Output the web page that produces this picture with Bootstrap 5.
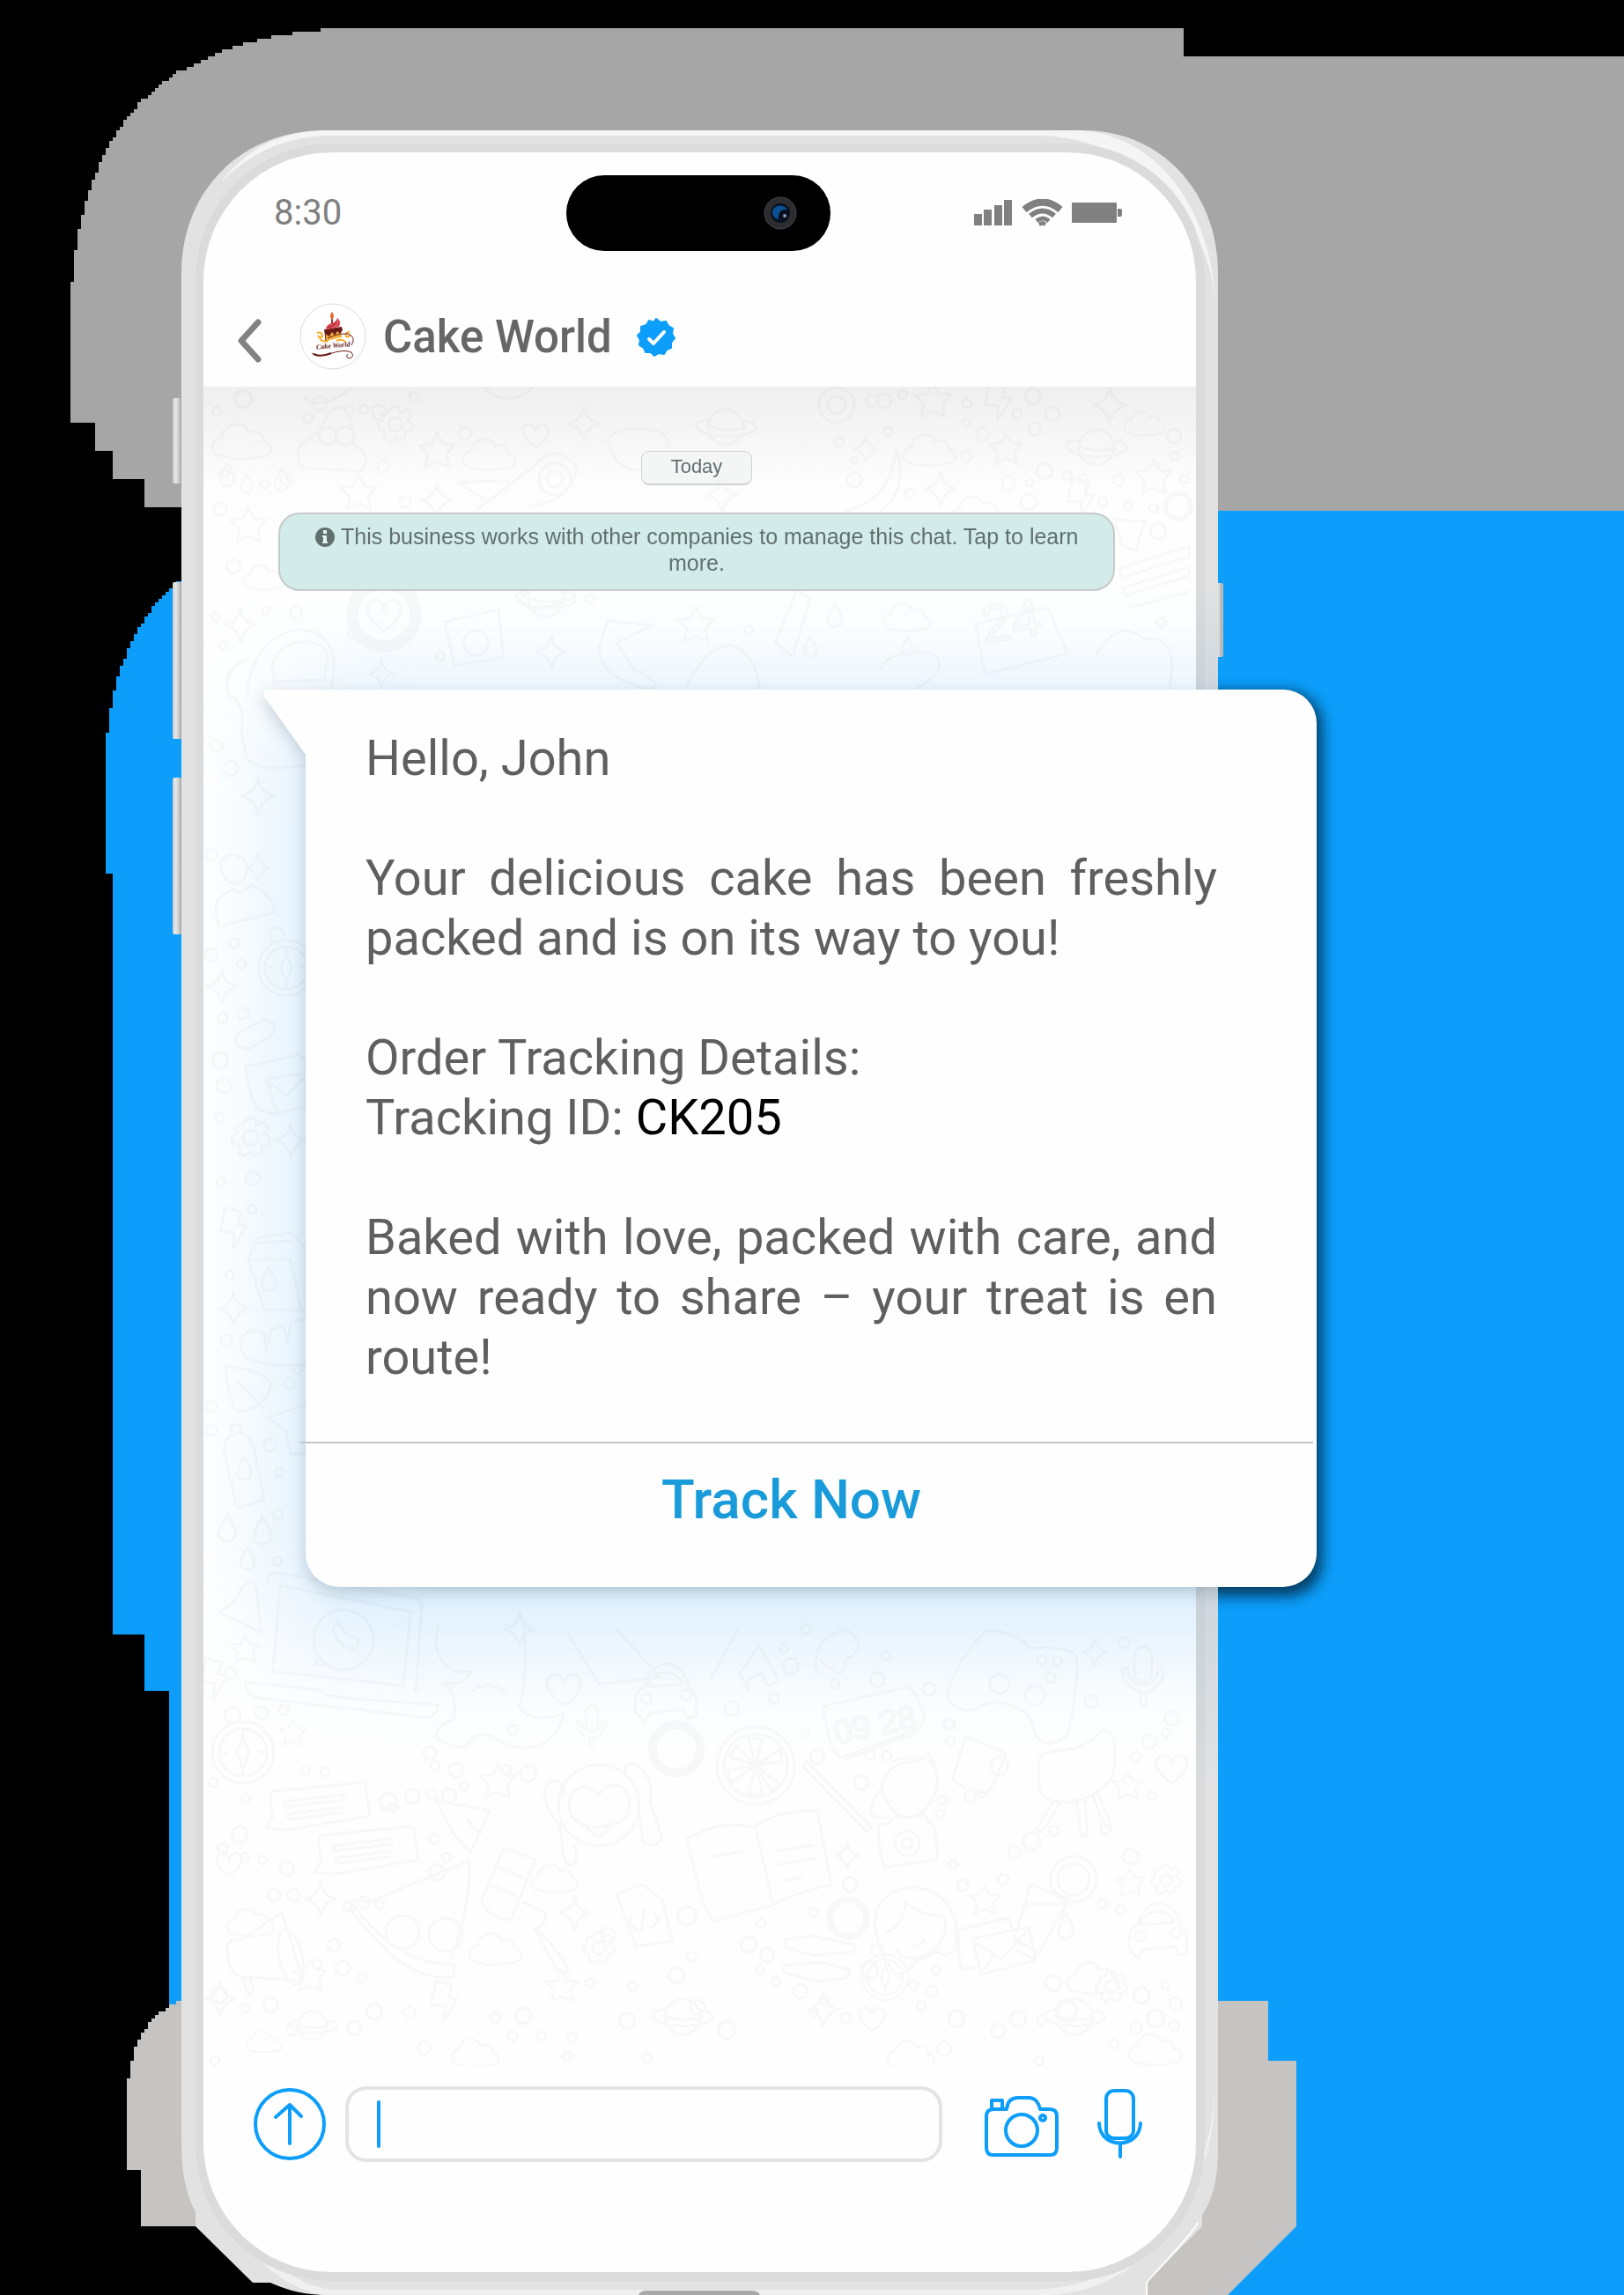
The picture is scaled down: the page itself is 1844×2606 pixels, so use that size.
<!DOCTYPE html>
<html lang="en">
<head>
<meta charset="utf-8">
<meta name="viewport" content="width=device-width, initial-scale=1">
<title>Cake World chat</title>
<link href="https://cdn.jsdelivr.net/npm/bootstrap@5.3.0/dist/css/bootstrap.min.css" rel="stylesheet">
<style>
  body { background: #000; font-family: Roboto, "Liberation Sans", sans-serif; }
  .stage { display: grid; grid-template-columns: 231fr 1127fr 486fr; padding: 173px 0 26px; overflow: hidden; }
  .artwork { z-index: 0; }
  .screen { grid-column: 2; background: #fefefe; border-radius: 146px; z-index: 1; }
  .status-row { padding: 26px 84px 25px 80px; color: #808080; }
  .clock { font-size: 40px; line-height: 48px; }
  .island { width: 300px; height: 86px; background: #000; border-radius: 43px; padding-right: 38px; }
  .chat-head { padding: 34px 38px 18px; }
  .back-btn { width: 28px; margin-right: 43px; }
  .brand-name { font-size: 51px; line-height: 60px; font-weight: 500; color: #666; margin: 0 28px 0 18px; }
  .chat { padding-top: 73px; padding-bottom: 544px; background: linear-gradient(#efefef, #fdfdfd 110px, #fefefe 160px); }
  .notices { padding: 0 92px 0 85px; font-family: "Liberation Sans", Arial, sans-serif; color: #61706e; }
  .day-pill { width: 126px; height: 39px; font-size: 22px; line-height: 34px; background: #f4f6f5; border: 1px solid #cfd2d1; border-bottom-width: 2px; border-radius: 9px; }
  .notice-box { height: 89px; margin-top: 31px; padding: 10px 30px; font-size: 25px; line-height: 30px; background: #d3ecea; border: 2px solid #c6cbca; border-radius: 24px; }
  .info-mark { margin-bottom: -3px; }
  .bubble { margin: 112px -137px 0 116px; background: #fefefe; border-radius: 0 38px 38px 38px; filter: drop-shadow(0 6px 9px rgba(30,60,80,.22)); }
  .bubble-tail { left: -48px; top: 0; width: 50px; height: 74px; }
  .bubble-text { padding: 44px 113px 62px 68px; font-size: 56px; line-height: 68px; color: #5f5f5f; text-align: justify; }
  .bubble-text p { margin-bottom: 68px; }
  .bubble-text p:last-child { margin-bottom: 0; }
  .bubble-rule { height: 2px; background: #c4c6c7; margin: 0 4px 0 -6px; }
  .track-btn { padding: 29px 113px 64px 68px; font-size: 62px; line-height: 70px; font-weight: 500; color: #199bd9; }
  .track-btn:hover { color: #199bd9; }
  .composer { padding: 23px 61px 125px 57px; color: #0c9efa; }
  .msg-box { height: 86px; border: 4px solid #e3e3e3; border-radius: 24px; margin: 0 48px 0 22px; }
  .msg-box input { background: transparent; outline: 0; min-width: 0; font-size: 36px; color: #5f5f5f; }
  .caret-bar { width: 4px; height: 54px; border-radius: 2px; background: #0c9efa; margin-left: 32px; }
  .camera-btn { margin-right: 44px; }
  .doodles { fill: none; stroke: #3c464b; stroke-width: 3; opacity: .034; }
  .doodles * { vector-effect: non-scaling-stroke; }
  .doodles .solid { fill: #3c464b; stroke: none; }
</style>
</head>
<body>
<main class="stage position-relative">
  <svg class="artwork position-absolute top-0 start-0 w-100 h-100" viewBox="0 0 1844 2606" preserveAspectRatio="none" aria-hidden="true">
    <defs>
      <filter id="soft" x="-10%" y="-10%" width="120%" height="120%"><feGaussianBlur stdDeviation="8"/></filter>
      <linearGradient id="key" x1="0" x2="1" y1="0" y2="0"><stop offset="0" stop-color="#ccc"/><stop offset=".3" stop-color="#e8e8e8"/><stop offset=".6" stop-color="#c8c8c8"/><stop offset=".8" stop-color="#aaa"/><stop offset="1" stop-color="#ccc"/></linearGradient>
      <linearGradient id="tint" x1="0" x2="0" y1="0" y2="1"><stop offset="0" stop-color="#9bbbd2" stop-opacity="0"/><stop offset=".1" stop-color="#9bbbd2" stop-opacity=".3"/><stop offset=".8" stop-color="#9bbbd2" stop-opacity=".35"/><stop offset="1" stop-color="#9bbbd2" stop-opacity="0"/></linearGradient>
    </defs>
    <!-- colour panels with stepped edges -->
    <g shape-rendering="crispEdges">
      <path fill="#a6a6a6" d="M364 32H1344V64H1844V580H206V576H164V544H128V512H108V480H80V320H84V284H88V260H92V244H96V228H100V216H104V204H108V196H112V184H116V176H120V168H124V160H128V156H132V148H136V144H140V136H144V132H148V128H152V124H156V116H160V112H168V108H172V104H176V100H180V96H184V92H192V88H196V84H200V80H212V76H220V72H228V68H236V64H244V60H252V56H264V52H276V48H292V44H308V40H332V36H364Z"/>
      <path fill="#0c9efa" d="M1360 580H1844V2606H1360Z"/>
      <path fill="#0c9efa" d="M206 656V660H200V664H196V668H192V672H188V676H184V680H180V684H176V688H172V696H168V700H164V708H160V712H156V720H152V728H148V736H144V748H140V756H136V768H132V784H128V804H124V832H120V992H128V1856H164V1920H192V2290H220V656Z"/>
      <path fill="#c6c4c2" d="M210 2272H200V2276H192V2280H188V2284H180V2288H176V2292H172V2296H168V2304H164V2308H160V2316H156V2324H152V2340H148V2360H144V2464H160V2528H260V2272Z"/>
    </g>
    <path fill="#c6c4c2" d="M1370 2272H1440V2340H1472V2528L1394 2606H1290V2500Z"/>
    <!-- shadow of the message card on the blue panel -->
    <rect x="1300" y="786" width="201" height="1026" rx="38" fill="#003457" opacity=".9" filter="url(#soft)"/>
    <!-- side keys -->
    <g fill="url(#key)"><rect x="196" y="452" width="12" height="97" rx="2"/><rect x="196" y="661" width="12" height="178" rx="2"/><rect x="196" y="883" width="12" height="178" rx="2"/><rect x="1380" y="662" width="9" height="84" rx="2"/></g>
    <!-- phone case -->
    <path fill="#e2e2e2" d="M206 310C206 220 270 148 370 148H1230C1320 148 1383 220 1383 310V2440C1383 2480 1375 2500 1365 2515V2528L1301 2592V2606H365C340 2605 320 2598 307 2592H287L222 2528V2512C212 2492 206 2470 206 2430Z"/>
    <path fill="#f5f5f5" d="M252 205C285 165 320 150 370 148H1220C1310 150 1372 230 1380 338C1368 240 1290 156 1180 154H370C320 156 285 175 252 205Z"/>
    <path fill="#f0f0f0" d="M250 2500C290 2550 330 2598 380 2600H1170C1300 2600 1374 2490 1379 2375C1382 2490 1300 2604 1190 2606H370C320 2600 280 2560 250 2500Z"/>
    <path fill="none" stroke="#fff" stroke-width="2" d="M1360 2524C1352 2540 1302 2590 1302 2592V2606"/>
    <rect x="222" y="163" width="1146" height="2427" rx="154" fill="#dbdbdb"/>
    <rect x="1356" y="660" width="27" height="1380" fill="url(#tint)"/>
    <path fill="#a9a9a9" d="M725 2606Q727 2601 735 2601H853Q861 2601 863 2606Z"/>
  </svg>

  <section class="screen">
    <div class="status-row d-flex align-items-center">
      <div class="clock flex-fill w-25">8:30</div>
      <div class="island flex-shrink-0 d-flex align-items-center justify-content-end">
        <svg width="38" height="38" viewBox="0 0 38 38" aria-hidden="true"><circle cx="19" cy="19" r="18" fill="#2c2d30" stroke="#46474a"/><circle cx="19" cy="19" r="11" fill="#07101c"/><path d="M10 18C10 9 25 8 27 16C22 13 16 17 17 26C13 25 10 22 10 18Z" fill="#0b4f94"/><circle cx="24" cy="22" r="2" fill="#8ea0b0"/></svg>
      </div>
      <div class="flex-fill w-25 d-flex justify-content-end">
        <svg width="168" height="32" viewBox="0 0 168 32" fill="#808080" role="img" aria-label="Signal, Wi-Fi and battery">
          <path d="M0 17h9v13H0zM11 12h9v18h-9zM23 7h9v23h-9zM34 1h9v29h-9z"/>
          <g fill="none" stroke="#808080"><path d="M57 12Q78-5 98 12" stroke-width="8"/><path d="M64 19Q78 8 91 19" stroke-width="6"/><path d="M71 25Q78 19 85 25" stroke-width="5"/></g><path d="M73 27Q78 23 82 27L80 31Q78 28 75 31Z"/>
          <rect x="111" y="4" width="51" height="23" rx="1"/><path d="M163 11h3q2 0 2 2v5q0 2-2 2h-3z"/>
        </svg>
      </div>
    </div>

    <header class="chat-head d-flex align-items-center">
      <button class="back-btn btn p-0 border-0 lh-1" type="button" aria-label="Back"><svg width="28" height="50" viewBox="0 0 28 50" class="mt-2"><path d="M24 4L5 25L24 46" fill="none" stroke="#828282" stroke-width="7" stroke-linecap="round" stroke-linejoin="round"/></svg></button>
      <svg width="77" height="77" viewBox="0 0 77 77" role="img" aria-label="Cake World logo">
        <circle cx="38" cy="38" r="37" fill="#fff" stroke="#ddd" stroke-width="1"/>
        <path d="M20 34q6-2 6 4q-3 3-5-1M57 33q-6 1-4 5q4 1 4-2M23 41q5 4 10 2M42 43q6-3 10 1" fill="none" stroke="#f6a91e" stroke-width="2"/>
        <path d="M29 34L47 30L48 39L30 43Z" fill="#f2b23e"/><path d="M28 30L48 27L49 31L46 35L43 32L40 37L37 33L34 38L29 35Z" fill="#681b17"/><path d="M29 32L30 43" stroke="#681b17" stroke-width="1"/>
        <path d="M30 29Q31 24 37 23Q42 21 43 17Q48 21 45 27L32 30Z" fill="#df4b57"/><path d="M32 28Q38 27 42 22" stroke="#8b1c25" fill="none"/>
        <path d="M37 17V24" stroke="#a83732" stroke-width="2"/><path d="M37 10Q41 15 37 19Q33 15 37 10Z" fill="#ee6534"/>
        <text x="19" y="51" font-family="Liberation Serif" font-style="italic" font-weight="700" font-size="8" fill="#681b17" transform="rotate(-5 38 50)">Cake World</text>
        <path d="M32 40Q45 34 55 35Q65 39 59 48M14 57Q20 62 34 58Q50 52 59 56Q63 62 56 63Q52 61 55 58" fill="none" stroke="#681b17" stroke-width="1"/><path d="M16 58Q24 62 36 57" fill="none" stroke="#681b17" stroke-width="2"/>
      </svg>
      <h1 class="brand-name">Cake World</h1>
      <svg width="44" height="44" viewBox="-22 -22 44 44" role="img" aria-label="Verified">
        <path fill="#0c9efa" stroke="#0c9efa" stroke-width="2" stroke-linejoin="round" d="M0-21L5-17L11-18L14-13L19-10L18-4L21 1L17 6L17 12L12 14L9 19L3 18L-2 21L-6 17L-12 17L-14 12L-19 9L-18 3L-21-2L-17-6L-17-12L-11-14L-8-19L-3-17Z"/>
        <path d="M-8 2L-3 7L9-6" fill="none" stroke="#fff" stroke-width="4" stroke-linecap="round" stroke-linejoin="round"/>
      </svg>
    </header>

    <div class="chat position-relative">
      <svg class="position-absolute top-0 start-0 w-100 h-100" viewBox="231 439 1127 1907" preserveAspectRatio="none" aria-hidden="true">
        <defs>
          <filter id="glow" x="-30%" y="-30%" width="160%" height="160%"><feGaussianBlur stdDeviation="60"/></filter>
          <g id="star"><path d="M0-20L7-8L20-7L11 4L14 18L0 12L-13 18L-10 4L-20-6L-6-8Z"/></g>
          <g id="spark"><path d="M0-20Q2-3 18 0Q3 3 0 20Q-3 3-18 0Q-2-3 0-20Z"/></g>
          <g id="cloud"><path d="M-24 18C-40 15-34-4-23-3C-22-20 2-24 7-9C18-14 25-6 23 0C38 4 34 18 22 18Q0 24-24 18Z"/></g>
          <g id="heart"><path d="M0 15C-16 4-18-6-14-11C-8-17-2-13 0-6C3-14 11-16 15-10C19-2 11 10 0 15Z"/></g>
          <g id="gear"><path d="M-4-20H4L6-13L13-17L18-10L14-4L20 0L18 7L12 8L11 15L4 18L0 14L-6 19L-13 15L-12 8L-19 6L-20-2L-14-5L-16-12L-8-14Z"/><circle r="8"/></g>
          <g id="planet"><circle r="20"/><path d="M-19-8C-40-8-38 4-16 9C6 13 38 8 34-1Q30-8 19-6M-22-2Q0 8 24 0"/></g>
          <g id="drop"><path d="M0-14Q9 0 8 6C5 14-6 14-8 6Q-8 0 0-14Z"/></g>
          <g id="compass"><circle r="35"/><circle r="27"/><circle cx="-12" cy="-42" r="9"/><path d="M0-18L7 0L0 18L-7 0ZM-24 0h7M17 0h7M0-25v6M0 19v6"/></g>
          <g id="photo"><path d="M-32-14Q-33-18-28-19L-20-20Q-14-31-2-27L18-29Q23-28 25-20L30-18Q35 5 34 22L-26 30Q-34 5-32-14Z"/><circle r="14" cy="3"/><circle r="6" cy="3"/></g>
          <g id="bolt"><path d="M-8-22L10-18L6-4L16-2L0 24L2 6L-14 4Z"/></g>
          <g id="mic"><rect x="-10" y="-30" width="20" height="40" rx="10"/><path d="M-24-4C-20 30 20 30 24-4L18-6C14 20-14 20-18-6ZM-3 22V38H3V22"/></g>
          <g id="chatbox"><path d="M-50-18L50-28Q56-28 56-20L60 10L-35 26L-58 24L-50 10Q-56-16-50-18ZM-38-6L30-14V-8L-36 0ZM-34 8L28 0V6L-32 14Z"/></g>
          <g id="mail"><path d="M-46-20L15-34L20-22M-46-18L-38 24L-22 22M-26-10L38-24L46 14L-16 30ZM-26-8L8 12L38-22M-16 28L0 6M46 14L20 0"/></g>
          <g id="car"><path d="M-34 20Q-38-4-24-10Q-20-34 2-36Q22-32 26-10Q38 0 34 24L24 26L20 16L-18 20L-24 30ZM-22-10Q-18-26 2-26Q16-24 18-12Z"/><circle cx="-22" cy="4" r="6"/><circle cx="22" cy="0" r="6"/></g>
          <g id="ring"><circle r="8"/></g>
          <g id="dot" class="solid"><circle r="5"/></g>
        </defs>
        <rect x="330" y="790" width="1260" height="1070" fill="#cfe9fd" opacity=".85" filter="url(#glow)"/>
        <g class="doodles" id="doodleLayer">
          <!-- pizza, megaphone, laptop, monkey, book, face and other one-off drawings -->
          <path d="M398 2160Q450 2230 510 2230Q520 2228 514 2245Q470 2250 430 2205Q400 2175 398 2165Q402 2153 418 2160L532 2113Q536 2160 512 2225"/><circle cx="457" cy="2194" r="19"/><circle cx="506" cy="2197" r="19"/>
          <path d="M258 2210Q258 2202 275 2202L320 2172L345 2250L285 2245Q258 2250 258 2210M275 2245L282 2265L288 2262L284 2245"/><ellipse cx="330" cy="2222" rx="13" ry="32" transform="rotate(-12 330 2222)"/>
          <path d="M305 1800Q300 1785 318 1786L472 1815Q482 1820 478 1835L472 1922M318 1800L310 1898L458 1914L466 1830ZM278 1910L364 1919L370 1925L415 1930L498 1936Q494 1952 482 1950L292 1928Q280 1926 278 1910"/><circle cx="390" cy="1862" r="34"/><path d="M360 1884L358 1890L380 1892M378 1850Q384 1872 404 1872L408 1862L398 1858L388 1850L384 1842Z"/>
          <circle cx="680" cy="2050" r="46"/><path d="M648 2060C640 2030 665 2020 680 2038C695 2016 720 2030 714 2056C712 2075 660 2085 648 2060M664 2072Q680 2080 692 2070Q688 2088 674 2084ZM636 2075Q610 2040 622 2025Q640 2015 640 2040M636 2070Q638 2110 645 2118Q660 2118 652 2095M710 2012Q710 1998 722 2004Q745 2020 738 2046L752 2086Q745 2100 730 2092L724 2052"/>
          <path d="M780 2088Q820 2065 856 2075Q880 2055 928 2056L944 2140Q900 2150 878 2163Q850 2170 812 2182Q800 2180 780 2088ZM858 2076L878 2163M810 2108L844 2102M880 2102L924 2095M883 2118L926 2110M888 2136L912 2132"/>
          <path d="M994 2190C990 2160 1010 2145 1036 2143C1075 2145 1085 2170 1090 2210Q1076 2225 1064 2216Q1055 2222 1040 2226Q1035 2240 1015 2242Q1000 2220 994 2190ZM1005 2195Q1028 2185 1028 2160Q1045 2175 1072 2176L1074 2190Q1068 2215 1045 2222Q1020 2228 1018 2212M1034 2210Q1046 2210 1050 2202"/>
          <circle cx="858" cy="2005" r="44"/><circle cx="858" cy="2005" r="36"/><path d="M858 2005L850 1974H866ZM858 2005L886 1986L888 2000ZM858 2005L886 2026L876 2034ZM858 2005L866 2038H850ZM858 2005L830 2024L826 2010ZM858 2005L828 1994L836 1982Z"/>
          <path d="M1076 1925C1080 1900 1100 1870 1120 1852Q1150 1850 1170 1872Q1210 1868 1222 1880Q1226 1910 1212 1970Q1190 1988 1176 1972Q1170 1945 1156 1940Q1130 1925 1104 1942Q1080 1942 1076 1925Z"/><circle cx="1135" cy="1912" r="11"/><circle cx="1175" cy="1925" r="11"/>
          <path d="M936 1945Q932 1940 940 1936L1030 1916Q1042 1920 1050 1952Q1046 1962 1036 1966L955 1996Q942 1990 936 1945M1046 1966L960 1998"/><text x="946" y="1972" font-family="Liberation Sans" font-size="38" transform="rotate(-12 990 1960)">09 28</text>
          <path d="M1180 2000C1180 1980 1225 1998 1250 1966C1270 1960 1268 2000 1262 2020Q1235 2050 1205 2046Q1178 2045 1180 2025ZM1196 2046L1176 2078L1184 2080L1204 2046M1222 2042L1228 2086L1234 2084L1232 2040M1240 2038L1256 2076L1262 2074L1246 2034"/>
          <path d="M1096 1972L1142 1990Q1134 2020 1120 2036Q1096 2034 1082 2020ZM1012 2000Q1050 1990 1060 2005Q1072 2030 1050 2055Q1032 2070 1018 2060Q1000 2040 1002 2025Q1010 2000 1040 2000L1055 1992L1064 2010M1002 2030Q985 2050 990 2062L1012 2065"/><circle cx="1135" cy="2005" r="10"/>
          <path d="M1170 2140L1214 2156L1180 2218L1152 2202ZM1164 2162H1208"/><circle cx="1219" cy="2134" r="26"/><circle cx="1219" cy="2134" r="18"/>
          <path d="M916 2000L990 2075L984 2080L912 2006ZM892 2202L920 2198L970 2208V2216L925 2220L892 2212ZM890 2232L930 2228L965 2236L962 2246L930 2250L890 2240Z"/>
          <path d="M498 1846C490 1870 500 1894 520 1898H534Q528 1916 502 1910Q520 1920 516 1952Q492 1960 496 1974Q510 1984 530 1984Q536 1964 560 1972Q590 1994 620 1978Q640 1960 640 1946Q600 1958 590 1938Q600 1900 594 1840M536 1920Q556 1906 578 1924"/>
          <path d="M572 2098L608 2112L580 2180Q560 2180 546 2160ZM564 2120L594 2132M556 2140L586 2152M594 2160L620 2172Q620 2186 608 2190Q640 2220 645 2238Q638 2245 630 2232L606 2188"/>
          <path d="M700 2150L730 2140L752 2158L764 2204L722 2210ZM718 2174L714 2184L724 2192M732 2166L728 2194M742 2170L748 2180L740 2190"/>
          <path d="M495 2044L556 2056L534 2104L515 2082ZM530 2066L546 2084M700 1850L750 1905L680 1912L645 1855M838 1850L805 1910M840 1900L862 1868L884 1908L872 1914L864 1900L850 1906V1920ZM928 1900Q920 1860 960 1850Q990 1870 960 1885Q960 1900 950 1900L930 1884"/>
          <path d="M281 793C280 705 380 690 379 757Q378 790 370 800M309 760C310 720 372 722 372 745L368 772L312 774ZM282 748Q250 760 260 790Q280 800 274 830L280 860Q290 880 360 866"/>
          <path d="M505 706L566 692L572 746L516 756Z"/><circle cx="540" cy="730" r="14"/>
          <path d="M690 705L740 710L700 730L720 760Q760 780 735 782Q680 770 680 735ZM780 780Q800 735 830 732Q860 745 862 782M880 730L905 670L920 680L900 745ZM590 682Q600 700 650 680L656 660L600 670ZM1108 708L1190 690L1212 742L1118 766Z"/><text x="1118" y="730" font-family="Liberation Sans" font-size="60" transform="rotate(-8 1118 730)">24</text>
          <path d="M1270 646L1350 620V632L1274 656ZM1274 668L1350 644V654L1278 676ZM1282 690L1350 672M1244 745Q1270 700 1300 726Q1340 720 1328 782M1000 760Q1010 735 1060 742Q1080 760 1040 782M960 580Q1010 570 1018 510Q1030 550 1010 570Q990 600 960 580M520 548Q560 545 582 548L555 570ZM540 580L605 530Q630 500 655 530Q650 570 600 575M345 450Q360 470 400 440M550 440Q576 465 605 440M1265 590L1300 592L1290 625L1275 620Z"/>
          <circle cx="630" cy="544" r="18"/><circle cx="630" cy="544" r="9"/><circle cx="950" cy="460" r="20"/><circle cx="950" cy="460" r="10"/>
          <path d="M340 520C330 500 360 500 365 485Q380 450 395 470Q405 490 400 505Q425 515 410 535L350 532Q335 530 340 520"/><circle cx="372" cy="495" r="10"/><circle cx="392" cy="495" r="10"/>
          <path d="M690 500Q700 480 750 490Q770 510 750 530Q720 540 700 524Z"/>
          <path d="M246 1040Q240 1020 265 1010L272 1015L285 1005Q310 1015 312 1036L248 1052ZM250 985C250 965 282 965 280 990C275 1010 255 1008 250 985"/>
          <!-- paperclip, card, milk box, bread, leaf and bottle down the left margin -->
          <g transform="translate(0 -557) scale(1 1.531)">
            <path d="M272 1140Q262 1135 275 1128L300 1120Q318 1122 308 1132L282 1142Z"/>
            <path d="M279 1155L340 1146L347 1150V1185L310 1190L292 1186Q280 1170 279 1155M302 1164L347 1160M302 1164L315 1190M304 1166L326 1176L347 1162"/>
            <path d="M282 1298L292 1282L330 1278L347 1290V1336L300 1335ZM282 1298L330 1298L342 1336M292 1286L332 1284"/>
            <path d="M347 1376Q270 1378 274 1362Q272 1348 300 1352L302 1366L308 1350L322 1347L326 1360L330 1345L347 1342M256 1377Q300 1380 308 1390Q304 1408 270 1411Q260 1405 256 1377M268 1388L300 1408M304 1415L347 1406M304 1415L324 1425L330 1442H347"/>
            <path d="M255 1440Q254 1428 272 1426Q285 1428 288 1438L300 1476L270 1482Q260 1460 255 1440M262 1426V1421H274V1426M248 1560Q270 1552 274 1542Q290 1530 292 1548L296 1575Q270 1565 248 1560"/>
          </g>
        </g>
      </svg>

      <div class="notices position-relative text-center">
        <div class="day-pill mx-auto">Today</div>
        <div class="notice-box"><svg class="info-mark align-baseline" width="23" height="23" viewBox="0 0 23 23" aria-hidden="true"><circle cx="11" cy="12" r="11" fill="#61706e"/><path d="M9 4h4v4H9zM8 10h5v7h1v2H8v-2h1v-5H8z" fill="#e4f4f2"/></svg> This business works with other companies to manage this chat. Tap to learn more.</div>
      </div>

      <article class="bubble position-relative">
        <svg class="bubble-tail position-absolute" viewBox="0 0 50 74" aria-hidden="true"><path d="M50 0H4Q-2 2 1 8L48 74H50Z" fill="#fefefe"/></svg>
        <div class="bubble-text">
          <p>Hello, John</p>
          <p>Your delicious cake has been freshly packed and is on its way to you!</p>
          <p>Order Tracking Details:<br>Tracking ID: <span class="text-black">CK205</span></p>
          <p>Baked with love, packed with care, and now ready to share – your treat is en route!</p>
        </div>
        <div class="bubble-rule"></div>
        <button type="button" class="track-btn btn w-100 border-0">Track Now</button>
      </article>
    </div>

    <form class="composer d-flex align-items-center">
      <button type="button" class="btn p-0 border-0 lh-1" aria-label="Send"><svg class="d-block" width="82" height="82" viewBox="0 0 82 82" fill="none" stroke="#0c9efa" stroke-width="4" stroke-linecap="round" stroke-linejoin="round"><circle cx="41" cy="41" r="39"/><path d="M41 63V19M25 33L41 19L54 32"/></svg></button>
      <div class="msg-box flex-fill d-flex align-items-center">
        <span class="caret-bar"></span>
        <input type="text" class="flex-fill border-0 h-100 px-2" aria-label="Message">
      </div>
      <button type="button" class="camera-btn btn p-0 border-0 lh-1" aria-label="Camera"><svg class="d-block" width="84" height="82" viewBox="0 0 84 82" fill="none" stroke="#0c9efa" stroke-width="4" stroke-linejoin="round"><path d="M10 24H25C26 14 32 11 38 11H50C58 11 62 18 63 24H74Q82 24 82 32V68Q82 76 74 76H10Q2 76 2 68V32Q2 24 10 24ZM8 24V14H20V24"/><circle cx="42" cy="48" r="18"/><circle cx="66" cy="34" r="3"/></svg></button>
      <button type="button" class="btn p-0 border-0 lh-1" aria-label="Voice message"><svg class="d-block" width="51" height="82" viewBox="0 0 51 82" fill="none" stroke="#0c9efa" stroke-width="4" stroke-linecap="round"><rect x="10" y="3" width="31" height="54" rx="9"/><path d="M2 40C3 70 48 70 49 40M26 64V78"/></svg></button>
    </form>
  </section>
</main>
<script>
  // Wallpaper motifs: name, then x, y and scale for each copy
  const motifs = {
    star: [496,512,1, 407,560,1, 282,597,1, 1059,455,1, 1142,510,.9, 1310,542,1, 790,710,1, 332,1968,.75, 278,1873,.8, 565,2023,1, 352,2244,.9, 638,2256,.9, 1118,2158,.85, 1280,2028,.8, 1283,2138,.8, 720,600,.8],
    spark: [663,481,1, 496,568,1, 983,510,.8, 1068,555,1, 1260,460,1.1, 273,710,1, 433,765,.8, 626,740,1, 293,904,1.1, 252,1120,1, 265,1486,1, 330,1295,1, 364,2156,1, 250,2270,1, 652,2172,1, 935,2282,1, 962,2107,.8, 1243,1876,.8, 293,985,.8, 820,562,1, 590,1850,1],
    cloud: [275,500,1, 556,515,.9, 1056,510,.9, 1300,480,.7, 300,655,.7, 285,2182,.8, 630,2132,.8, 563,2212,.9, 300,2318,.6, 1242,2245,.9, 1110,580,.9, 1030,700,.8, 540,2330,.8, 1035,2332,.8, 1312,2326,.9],
    heart: [608,494,.9, 260,2116,.9, 640,1918,1.2, 1330,2008,1.1, 990,2292,.9, 436,698,1.2],
    gear: [449,482,1, 285,1292,1.1, 680,2212,.9, 1324,2135,.85, 1262,2256,.9],
    planet: [824,485,1, 1245,508,1, 355,2300,.8, 775,2290,1, 1220,2290,1, 620,680,1],
    drop: [258,540,1, 280,550,.8, 320,545,1, 948,700,1, 920,735,.9, 1030,735,.8, 258,1736,1.2, 298,1739,1.2, 281,1770,1, 305,1453,1, 277,1668,1, 1210,2188,1.1],
    compass: [276,1990,1, 325,1099,.9, 1005,2245,.75],
    photo: [1030,2090,1],
    bolt: [1132,455,1, 1226,565,1, 264,1394,1, 503,2272,1, 242,1905,1],
    mic: [1298,1900,1, 672,1958,.7],
    chatbox: [360,2052,1, 415,2102,1],
    mail: [1130,2212,1],
    car: [756,1925,1, 1315,2195,.95],
    ring: [276,453,1.2, 363,458,1, 397,465,.6, 430,468,1, 528,492,.9, 435,530,.8, 460,570,.8, 325,545,.8, 250,578,.9, 990,455,.8, 1004,455,1, 1173,450,1.1, 1195,470,1, 1116,493,.9, 1175,487,.9, 1333,495,1, 1097,518,.8, 970,545,1, 1186,535,1.1, 1145,548,.9, 1270,545,.8, 1168,570,1.1, 1338,575,1.8, 1315,603,1.1, 265,643,1, 336,695,.8, 246,847,.8, 262,873,1, 436,698,4.5, 240,970,.8, 240,1084,.9, 276,1151,.8, 250,1204,1.1, 254,1233,1, 287,1338,1, 257,1522,.8, 329,1571,.8, 306,1641,.9, 240,1597,.8, 240,1624,.8, 262,1900,.8, 297,1945,.9, 488,1990,.9, 518,2010,1, 600,2014,1.1, 441,2046,1.2, 468,2040,1, 490,2037,.7, 510,2039,1, 272,2083,1.1, 326,2122,1, 311,2152,.9, 333,2152,.9, 496,2126,1.1, 413,2160,.8, 379,2209,.9, 389,2235,1, 249,2265,1.1, 307,2277,1, 425,2284,1.1, 465,2285,.8, 402,2303,1, 332,2305,.8, 482,2325,.9, 594,2289,1.1, 690,2197,1, 780,2175,1.3, 768,1986,3.4, 768,2243,1.1, 712,2295,1.1, 792,2279,1, 831,1940,1, 898,1892,1.1, 928,1995,1, 1055,1918,.9, 996,1907,1, 978,2024,1, 965,2140,1, 963,2178,2.6, 850,2208,1.1, 871,2220,1, 987,2237,1.2, 909,2261,1, 825,2305,1.2, 1058,2261,.8, 1086,2292,1.1, 1133,2306,1, 1156,2292,1.1, 1072,2326,1, 1196,2252,1.1, 1211,2283,1.4, 1296,2266,1.1, 1312,2292,1.2, 1290,2302,.8, 1335,2275,.9, 1284,2108,1.1, 1171,2091,1.2, 1152,2103,.9, 1102,2040,.8, 1305,1978,1, 1239,1932,.9, 1330,1951,1, 1276,1865,.8],
    dot: [246,467,1, 350,475,1, 413,465,1, 470,450,1, 255,537,1, 300,550,1, 400,620,1, 245,700,.9, 302,693,.9, 253,733,.9, 400,720,1, 1025,448,1, 1098,458,1, 1155,470,1, 1097,480,.8, 1008,490,1, 953,502,1, 970,523,.8, 1212,540,1, 1230,544,1, 1334,518,1, 1345,544,1, 1169,548,.8, 1033,560,1, 1252,570,1, 1281,574,1, 1310,577,1, 1318,707,1, 500,745,1, 670,680,1, 850,715,1, 266,1071,1.1, 274,1095,1, 253,1156,1.1, 249,1269,1, 251,1342,1, 286,1373,1, 261,1448,1, 338,1555,.9, 317,1672,1, 316,1720,1.1, 315,1773,1, 322,1942,1.1, 347,2010,.9, 369,2012,.9, 242,2024,1, 279,2042,1, 447,2053,1, 253,2099,1.1, 278,2109,1, 298,2112,1, 493,2088,1.1, 507,2109,1, 395,2165,1, 431,2162,1, 360,2230,1, 411,2246,1, 278,2280,1, 244,2340,1, 582,1964,1.1, 494,2005,1, 527,2028,1, 575,2009,1, 563,2291,1.1, 582,2312,1.1, 615,2312,1, 650,2314,1, 670,2252,1, 785,2222,1, 718,2256,1, 644,2335,1, 735,2336,1, 890,1872,1, 915,1850,1, 948,1912,1, 879,1929,1.1, 1006,1880,1, 1078,1958,1.2, 1079,1977,1, 914,1968,.8, 988,1993,1, 1007,1993,1.1, 1070,2044,1, 1093,2141,1.2, 1139,2134,1.2, 1082,2117,1, 1068,2060,1, 1115,2037,.8, 1197,2079,1.1, 1255,2077,1.1, 1308,2039,1, 1290,1995,1.1, 1324,1968,1, 1183,1885,1, 1201,1886,1, 1193,1905,1.1, 864,2184,1, 881,2250,1, 923,2171,1, 863,2237,1, 936,2271,1.1, 960,2291,1.1, 924,2285,1, 1037,2254,1, 1046,2278,1, 1063,2237,1, 1252,2162,1, 1272,2168,1, 1323,2255,.8, 1333,2300,1.1, 1183,2294,1.1, 1265,2321,1, 1180,2340,1]
  };
  const layer = document.getElementById('doodleLayer');
  let markup = '';
  for (const [name, spots] of Object.entries(motifs)) {
    for (let i = 0; i < spots.length; i += 3) {
      markup += `<use href="#${name}" transform="translate(${spots[i]} ${spots[i + 1]}) scale(${spots[i + 2]})"/>`;
    }
  }
  layer.insertAdjacentHTML('beforeend', markup);
</script>
<script src="https://cdn.jsdelivr.net/npm/bootstrap@5.3.0/dist/js/bootstrap.bundle.min.js"></script>
</body>
</html>
